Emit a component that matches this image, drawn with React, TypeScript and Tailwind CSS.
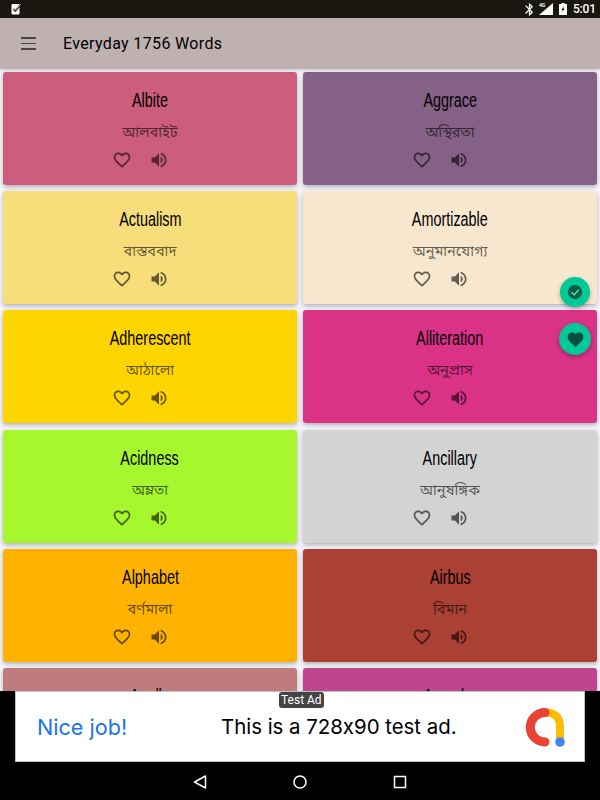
import React from "react";

const heartOutline =
  "M16.5 3c-1.74 0-3.41.81-4.5 2.09C10.91 3.81 9.24 3 7.5 3 4.42 3 2 5.42 2 8.5c0 3.78 3.4 6.86 8.55 11.54L12 21.35l1.45-1.32C18.6 15.36 22 12.28 22 8.5 22 5.42 19.58 3 16.5 3zm-4.4 15.55l-.1.1-.1-.1C7.14 14.24 4 11.39 4 8.5 4 6.5 5.5 5 7.5 5c1.54 0 3.04.99 3.57 2.36h1.87C13.46 5.99 14.96 5 16.5 5c2 0 3.5 1.5 3.5 3.5 0 2.89-3.14 5.74-7.9 10.05z";
const heartSolid =
  "M12 21.35l-1.45-1.32C5.4 15.36 2 12.28 2 8.5 2 5.42 4.42 3 7.5 3c1.74 0 3.41.81 4.5 2.09C13.09 3.81 14.76 3 16.5 3 19.58 3 22 5.42 22 8.5c0 3.78-3.4 6.86-8.55 11.54L12 21.35z";
const volumeUp =
  "M3 9v6h4l5 5V4L7 9H3zm13.5 3c0-1.77-1.02-3.29-2.5-4.03v8.05c1.48-.73 2.5-2.25 2.5-4.02zM14 3.23v2.06c2.89.86 5 3.54 5 6.71s-2.11 5.85-5 6.71v2.06c4.01-.91 7-4.49 7-8.77s-2.99-7.86-7-8.77z";

const words = [
  { word: "Albite", meaning: "আলবাইট", color: "bg-[#cc5d7c]" },
  { word: "Aggrace", meaning: "অস্থিরতা", color: "bg-[#856087]" },
  { word: "Actualism", meaning: "বাস্তববাদ", color: "bg-[#f8dd7b]" },
  { word: "Amortizable", meaning: "অনুমানযোগ্য", color: "bg-[#f7e7ce]" },
  { word: "Adherescent", meaning: "আঠালো", color: "bg-[#ffd500]" },
  { word: "Alliteration", meaning: "অনুপ্রাস", color: "bg-[#da3287]" },
  { word: "Acidness", meaning: "অম্লতা", color: "bg-[#a7f72f]" },
  { word: "Ancillary", meaning: "আনুষঙ্গিক", color: "bg-[#d3d3d3]" },
  { word: "Alphabet", meaning: "বর্ণমালা", color: "bg-[#ffb300]" },
  { word: "Airbus", meaning: "বিমান", color: "bg-[#ab4034]" },
  { word: "Apollo", meaning: "অ্যাপোলো", color: "bg-[#c07c7c]" },
  { word: "Anarchy", meaning: "নৈরাজ্য", color: "bg-[#c1448f]" },
];

const Icon = ({ d, className }: { d: string; className: string }) => (
  <svg viewBox="0 0 24 24" className={className} fill="currentColor">
    <path d={d} />
  </svg>
);

const WordCard = ({ word, meaning, color }: { word: string; meaning: string; color: string }) => (
  <div className={`h-[113px] rounded-[3px] pt-[15px] flex flex-col items-center shadow-[0_2px_4px_rgba(0,0,0,0.28)] ${color}`}>
    {/* no condensed family installed, so the title is squeezed horizontally */}
    <div className="h-[26px] leading-[26px] text-[20px] text-black scale-x-[0.72] font-['Liberation_Sans',sans-serif]">
      {word}
    </div>
    <div className="mt-[9px] h-[24px] leading-[24px] text-[14.5px] text-black/60 font-['Noto_Sans_Bengali','Noto_Sans',sans-serif]">
      {meaning}
    </div>
    <div className="mt-[4px] flex gap-[17px] text-black/60 pr-[19px]">
      <Icon d={heartOutline} className="w-[20px] h-[20px]" />
      <Icon d={volumeUp} className="w-[20px] h-[20px]" />
    </div>
  </div>
);

export default function App() {
  return (
    <div className="w-[600px] h-[800px] overflow-hidden flex flex-col bg-black font-['Roboto',sans-serif]">
      {/* Status bar */}
      <div className="h-[18px] shrink-0 bg-[#1a1710] flex items-center justify-between pl-[11px] pr-[7px] text-white">
        <svg viewBox="0 0 10 12" className="w-[10px] h-[12px]" fill="none">
          <rect x="0.5" y="1" width="8" height="10.5" rx="1" fill="#fff" />
          <path d="M2.5 6l1.8 1.8L10 1" stroke="#1a1710" strokeWidth="1.8" />
          <path d="M3 6l1.3 1.3L9.6 1" stroke="#fff" strokeWidth="0.7" />
        </svg>
        <div className="flex items-center text-[12px] font-medium">
          <svg viewBox="0 0 24 24" className="w-[15px] h-[15px]" fill="#fff">
            <path d="M17.71 7.71L12 2h-1v7.59L6.41 5 5 6.41 10.59 12 5 17.59 6.41 19 11 14.41V22h1l5.71-5.71-4.3-4.29 4.3-4.29zM13 5.83l1.88 1.88L13 9.59V5.83zm1.88 10.46L13 18.17v-3.76l1.88 1.88z" />
          </svg>
          <div className="relative ml-[2px] w-[14px] h-[12px]">
            <svg viewBox="0 0 14 12" className="w-[14px] h-[12px]" fill="#fff">
              <path d="M14 0v12H0z" />
            </svg>
            <span className="absolute left-0 top-[-1px] text-[5px] leading-[6px] font-bold">4G</span>
          </div>
          <svg viewBox="0 0 8 12" className="ml-[6px] w-[8px] h-[12px]">
            <path d="M2.5 0h3v1H8v11H0V1h2.5z" fill="#fff" />
            <path d="M4.6 3L2.5 7h1.3l-.4 2.6L5.6 5.6H4.2z" fill="#1a1710" />
          </svg>
          <span className="ml-[6px] leading-[18px] tracking-[-0.2px] w-[20px]">5:01</span>
        </div>
      </div>

      {/* App bar */}
      <div className="h-[51px] shrink-0 bg-[#bfb0b2] flex items-center pl-[21px] shadow-[0_1px_3px_rgba(0,0,0,0.2)] z-10">
        <div className="w-[15px] flex flex-col gap-[3.8px]">
          <div className="h-[1.5px] bg-[#4a4446]" />
          <div className="h-[1.5px] bg-[#4a4446]" />
          <div className="h-[1.5px] bg-[#4a4446]" />
        </div>
        <div className="ml-[27px] pt-[1px] text-[16px] tracking-[0.35px] font-normal text-black">Everyday 1756 Words</div>
      </div>

      {/* Word grid */}
      <div className="relative h-[622px] shrink-0 overflow-hidden bg-[#f4f4fa] pt-[3px] px-[3px]">
        <div className="grid grid-cols-2 gap-x-[6px] gap-y-[6.2px]">
          {words.map((w) => (
            <WordCard key={w.word} {...w} />
          ))}
        </div>
        <div className="absolute left-[560px] top-[208px] w-[30px] h-[30px] rounded-full bg-[#00c896] flex items-center justify-center shadow-[0_2px_4px_rgba(0,0,0,0.3)]">
          <svg viewBox="0 0 18 18" className="w-[16px] h-[16px]">
            <circle cx="9" cy="9" r="8" fill="#0b5c47" />
            <path d="M5 9.2l3 3L13.2 6.5" stroke="#7fe3c6" strokeWidth="1.4" fill="none" />
          </svg>
        </div>
        <div className="absolute left-[559px] top-[254px] w-[32px] h-[32px] rounded-full bg-[#00c896] flex items-center justify-center text-[#08503d] shadow-[0_2px_4px_rgba(0,0,0,0.3)]">
          <Icon d={heartSolid} className="w-[19px] h-[19px]" />
        </div>
      </div>

      {/* Ad banner */}
      <div className="relative h-[71px] shrink-0 bg-black flex justify-center">
        <div className="w-[570px] h-[71px] bg-white border border-[#b9c3c9] flex items-center pl-[21px] pt-[1px] font-['Inter',sans-serif] [font-feature-settings:'calt'_0]">
          <div className="text-[21.6px] text-[#1a73e8] w-[184px] whitespace-nowrap">Nice job!</div>
          <div className="text-[20.4px] text-black whitespace-nowrap">This is a 728x90 test ad.</div>
          <svg viewBox="0 0 42 42" className="absolute left-[524px] top-[16px] w-[42px] h-[42px]" fill="none">
            <path d="M22 5.5C31 5.5 36 11 36 19V35" stroke="#fbbc04" strokeWidth="8" strokeLinecap="round" />
            <path d="M21 5.5A14.75 14.75 0 1 0 21 35" stroke="#ea4335" strokeWidth="9" strokeLinecap="round" />
            <circle cx="36" cy="35" r="4.8" fill="#4285f4" />
          </svg>
        </div>
        <div className="absolute left-[279px] top-[1px] h-[16px] px-[2px] leading-[16px] rounded-[3px] bg-[#444] text-white text-[12px]">
          Test Ad
        </div>
      </div>

      {/* Nav bar */}
      <div className="flex-1 bg-black flex items-center justify-center gap-[86px] pt-[1px]">
        <svg viewBox="0 0 14 14" className="w-[14px] h-[14px]" fill="none" stroke="#fff" strokeWidth="1.5">
          <path d="M12.5 1v12L1.5 7z" strokeLinejoin="round" />
        </svg>
        <svg viewBox="0 0 14 14" className="w-[14px] h-[14px]" fill="none" stroke="#fff" strokeWidth="1.5">
          <circle cx="7" cy="7" r="6" />
        </svg>
        <svg viewBox="0 0 14 14" className="w-[14px] h-[14px]" fill="none" stroke="#fff" strokeWidth="1.5">
          <rect x="1.5" y="1.5" width="11" height="11" />
        </svg>
      </div>
    </div>
  );
}
